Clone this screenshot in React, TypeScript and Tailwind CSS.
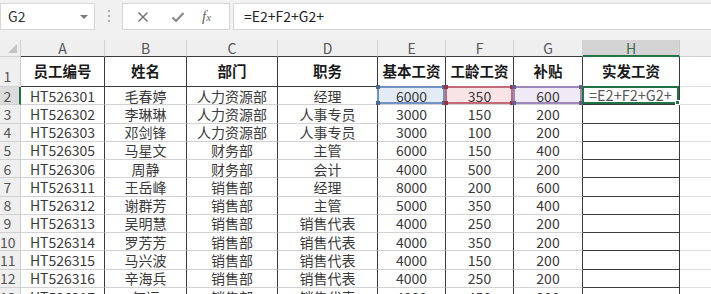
import React from "react";

const rows: string[][] = [
  ["HT526301", "毛春婷", "人力资源部", "经理", "6000", "350", "600"],
  ["HT526302", "李琳琳", "人力资源部", "人事专员", "3000", "150", "200"],
  ["HT526303", "邓剑锋", "人力资源部", "人事专员", "3000", "100", "200"],
  ["HT526305", "马星文", "财务部", "主管", "6000", "150", "400"],
  ["HT526306", "周静", "财务部", "会计", "4000", "500", "200"],
  ["HT526311", "王岳峰", "销售部", "经理", "8000", "200", "600"],
  ["HT526312", "谢群芳", "销售部", "主管", "5000", "350", "400"],
  ["HT526313", "吴明慧", "销售部", "销售代表", "4000", "250", "200"],
  ["HT526314", "罗芳芳", "销售部", "销售代表", "4000", "350", "200"],
  ["HT526315", "马兴波", "销售部", "销售代表", "4000", "150", "200"],
  ["HT526316", "辛海兵", "销售部", "销售代表", "4000", "250", "200"],
  ["HT526317", "何福", "销售部", "销售代表", "4000", "450", "200"],
];

const widths = ["w-[84px]", "w-[82px]", "w-[91px]", "w-[100px]", "w-[68px]", "w-[68px]", "w-[69px]", "w-[97px]"];
const letters = ["A", "B", "C", "D", "E", "F", "G", "H"];
const heads = ["员工编号", "姓名", "部门", "职务", "基本工资", "工龄工资", "补贴", "实发工资"];

function Corners({ color }: { color: string }) {
  return (
    <>
      <span className={`absolute -left-[3px] -top-[3px] h-[4px] w-[4px] ${color}`} />
      <span className={`absolute -right-[3px] -top-[3px] h-[4px] w-[4px] ${color}`} />
      <span className={`absolute -left-[3px] -bottom-[3px] h-[4px] w-[4px] ${color}`} />
      <span className={`absolute -right-[3px] -bottom-[3px] h-[4px] w-[4px] ${color}`} />
    </>
  );
}

export default function App() {
  return (
    <div className="h-[294px] w-[711px] overflow-hidden bg-white font-['Noto_Sans_CJK_SC','Noto_Sans',sans-serif] text-[#333]">
      {/* formula bar */}
      <div className="flex h-[40px] items-start bg-[#f1f1f1] pt-[3px]">
        <div className="relative flex h-[27px] w-[95px] items-center border border-[#d6d6d6] bg-white pl-[7px] text-[14px] text-[#333]">
          G2
          <span className="absolute right-[6px] top-[11px] h-0 w-0 border-x-[4px] border-t-[4px] border-x-transparent border-t-[#7a7a7a]" />
        </div>
        <div className="flex w-[27px] flex-col items-center justify-center gap-[3px] pt-[7px]">
          <span className="h-[2px] w-[2px] bg-[#b0b0b0]" />
          <span className="h-[2px] w-[2px] bg-[#b0b0b0]" />
          <span className="h-[2px] w-[2px] bg-[#b0b0b0]" />
        </div>
        <div className="flex h-[27px] w-[108px] items-center border border-[#d6d6d6] bg-white">
          <span className="ml-[12px] flex w-[16px] justify-center">
            <svg width="12" height="12" viewBox="0 0 12 12"><path d="M1.5 1.5 L10.5 10.5 M10.5 1.5 L1.5 10.5" stroke="#6f6f6f" strokeWidth="1.4" /></svg>
          </span>
          <span className="ml-[19px] flex w-[16px] justify-center">
            <svg width="14" height="12" viewBox="0 0 14 12"><path d="M1.5 6.5 L5 10 L12.5 2" stroke="#8a8a8a" strokeWidth="2.2" fill="none" /></svg>
          </span>
          <span className="ml-[16px] font-['Liberation_Serif',serif] text-[15px] italic text-[#666]">
            f<span className="text-[11px]">x</span>
          </span>
        </div>
        <div className="ml-[3px] flex h-[27px] flex-1 items-center border border-r-0 border-[#d6d6d6] bg-white pl-[10px] text-[14px] text-[#222]">
          =E2+F2+G2+
        </div>
      </div>

      {/* column header row */}
      <div className="flex h-[17px]">
        <div className="relative w-[21px] border-b border-r border-[#d0d0d0] bg-[#efefef]">
          <span className="absolute bottom-[3px] right-[3px] h-0 w-0 border-b-[9px] border-l-[9px] border-b-[#c4c4c4] border-l-transparent" />
        </div>
        {letters.map((l, i) =>
          l === "H" ? (
            <div
              key={l}
              className={`${widths[i]} flex items-center justify-center border-b-2 border-r border-b-[#217346] border-r-[#c8c8c8] bg-[#d4d4d4] text-[14px] leading-none text-[#3d6a4c]`}
            >
              {l}
            </div>
          ) : (
            <div
              key={l}
              className={`${widths[i]} flex items-center justify-center border-b border-r border-b-[#3a3a3a] border-r-[#d4d4d4] bg-[#efefef] text-[14px] leading-none text-[#555]`}
            >
              {l}
            </div>
          )
        )}
        <div className="flex-1 border-b border-[#d0d0d0] bg-[#efefef]" />
      </div>

      {/* row 1 */}
      <div className="flex h-[30px]">
        <div className="flex w-[21px] items-end border-b border-r border-[#d0d0d0] bg-[#efefef] pb-[3px] text-[14px] leading-none text-[#555]">
          <span className="w-[15px] text-center">1</span>
        </div>
        {heads.map((h, i) => (
          <div
            key={h}
            className={`${widths[i]} flex items-center justify-center border-b border-r border-[#3a3a3a] ${i === 7 ? "border-b-[#217346]" : ""} text-[14.5px] font-bold leading-none text-[#1a1a1a]`}
          >
            {h}
          </div>
        ))}
        <div className="flex-1 border-b border-[#e0e0e0]" />
      </div>

      {/* data rows */}
      {rows.map((r, ri) => {
        const n = ri + 2;
        const sel = ri === 0;
        return (
          <div key={n} className="flex h-[18.27px]">
            <div
              className={`flex w-[21px] items-center border-b ${sel ? "border-r-2 border-r-[#217346] bg-[#dcdcdc]" : "border-r border-r-[#d0d0d0] bg-[#efefef]"} border-b-[#d0d0d0] text-[14px] leading-none text-[#555]`}
            >
              <span className="w-[15px] text-center">{n}</span>
            </div>
            {r.map((c, ci) => {
              let extra = "";
              let overlay: React.ReactNode = null;
              if (sel && ci === 4) {
                extra = "bg-[#e3ebf6]";
                overlay = (
                  <span className="absolute -left-[1px] -top-[1px] h-[calc(100%+1px)] w-[calc(100%+1px)] border-2 border-[#7392c4]">
                    <Corners color="bg-[#4a6a9c]" />
                  </span>
                );
              } else if (sel && ci === 5) {
                extra = "bg-[#f8e3e5]";
                overlay = (
                  <span className="absolute -left-[1px] -top-[1px] h-[calc(100%+1px)] w-[calc(100%+1px)] border-2 border-[#c26a79]">
                    <Corners color="bg-[#953647]" />
                  </span>
                );
              } else if (sel && ci === 6) {
                extra = "bg-[#efeaf6]";
                overlay = (
                  <span className="absolute -left-[1px] -top-[1px] h-[calc(100%+1px)] w-[calc(100%+1px)] border-2 border-[#9d88ba]">
                    <Corners color="bg-[#705a93]" />
                  </span>
                );
              }
              return (
                <div
                  key={ci}
                  className={`${widths[ci]} relative flex items-center justify-center border-b border-r border-b-[#d2d2d2] border-r-[#3a3a3a] ${extra} text-[14px] leading-none text-[#3a3a3a]`}
                >
                  {c}
                  {overlay}
                </div>
              );
            })}
            <div
              className={`${widths[7]} relative flex items-center border-b border-r border-[#3a3a3a] pl-[6px] text-[14.5px] leading-none text-[#5a5a5a]`}
            >
              {sel ? "=E2+F2+G2+" : ""}
              {sel && (
                <span className="absolute -left-[1px] -top-[1px] h-[calc(100%+1px)] w-[calc(100%+1px)] border-2 border-[#217346]">
                  <span className="absolute -bottom-[3px] -right-[3px] h-[5px] w-[5px] border border-white bg-[#217346]" />
                </span>
              )}
            </div>
            <div className="flex-1 border-b border-[#e0e0e0]" />
          </div>
        );
      })}
    </div>
  );
}
